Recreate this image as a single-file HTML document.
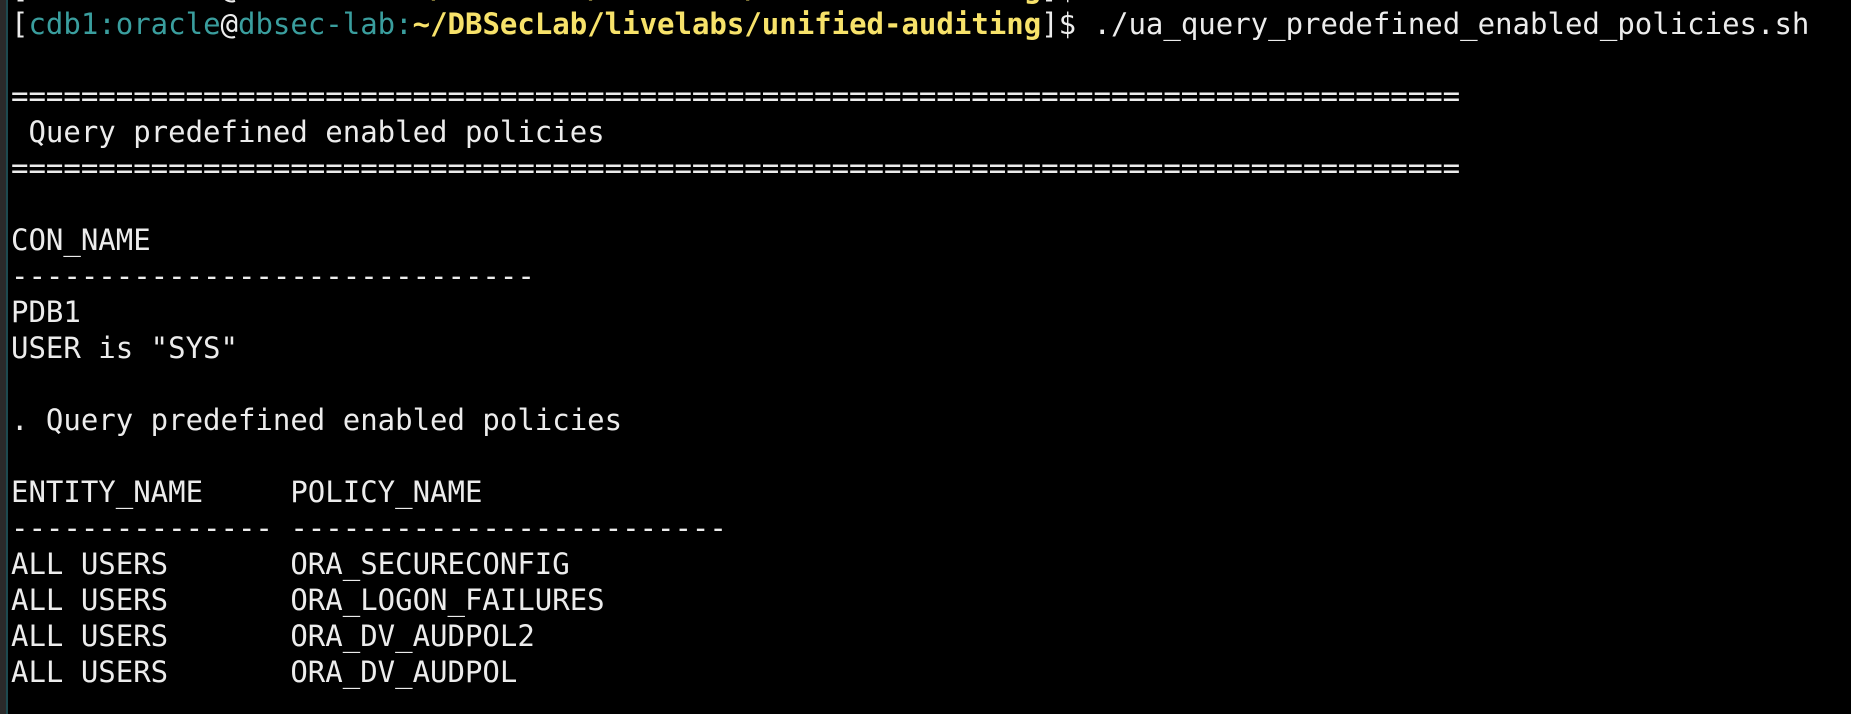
<!DOCTYPE html>
<html><head><meta charset="utf-8"><style>
html,body{margin:0;padding:0;background:#000;width:1851px;height:714px;overflow:hidden;}
.bar{position:absolute;left:0;top:0;width:6px;height:714px;background:#2a2a2a;}
.bar2{position:absolute;left:6px;top:0;width:2px;height:714px;background:#1e4a50;}
pre{position:absolute;left:11px;top:-30px;margin:0;font-family:"DejaVu Sans Mono","Liberation Mono",monospace;font-size:29px;line-height:36px;color:#ececec;white-space:pre;}
.c{color:#3a9e9e}.y{color:#f7e26a;font-weight:bold}
</style></head><body>
<div class="bar"></div><div class="bar2"></div>
<pre>[<span class="c">cdb1:oracle</span>@<span class="c">dbsec-lab:</span><span class="y">~/DBSecLab/livelabs/unified-auditing</span>]$ 
[<span class="c">cdb1:oracle</span>@<span class="c">dbsec-lab:</span><span class="y">~/DBSecLab/livelabs/unified-auditing</span>]$ ./ua_query_predefined_enabled_policies.sh

===================================================================================
 Query predefined enabled policies
===================================================================================

CON_NAME
------------------------------
PDB1
USER is "SYS"

. Query predefined enabled policies

ENTITY_NAME     POLICY_NAME
--------------- -------------------------
ALL USERS       ORA_SECURECONFIG
ALL USERS       ORA_LOGON_FAILURES
ALL USERS       ORA_DV_AUDPOL2
ALL USERS       ORA_DV_AUDPOL
</pre>
</body></html>
